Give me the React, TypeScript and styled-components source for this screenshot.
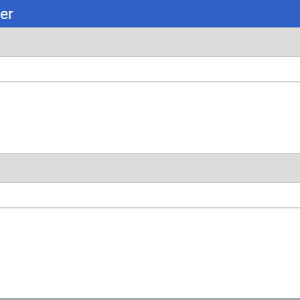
import styled, { createGlobalStyle } from 'styled-components'

const Global = createGlobalStyle`
    html, body {
        margin: 0;
        padding: 0;
        background: #ffffff;
        font-family: 'Roboto', 'Liberation Sans', sans-serif;
    }
`

const Page = styled.div`
    width: 300px;
    height: 300px;
    display: flex;
    flex-direction: column;
    overflow: hidden;
`

const TopBar = styled.div`
    height: 27px;
    background-color: #2f62c9;
    border-bottom: 1px solid #98a4c4;
    display: flex;
    align-items: center;
    color: white;
    font-size: 15px;
`

const Band = styled.div<{ $top?: boolean }>`
    height: 28px;
    background-color: #dcdcdc;
    border-top: ${p => (p.$top ? '1px solid #cfcfcf' : 'none')};
    border-bottom: 1px solid #c9c9c9;
`

const Row = styled.div`
    height: 24px;
    border-bottom: 1px solid #d2d2d2;
    box-shadow: 0 1px 0 #ececec;
`

const Filler = styled.div<{ $h: number }>`
    height: ${p => p.$h}px;
`

const Bottom = styled.div`
    flex: 1;
    border-bottom: 2px solid #a9a9b0;
`

export default function App() {
    return (
        <Page>
            <Global />
            <TopBar>er</TopBar>
            <Band />
            <Row />
            <Filler $h={71} />
            <Band $top />
            <Row />
            <Bottom />
        </Page>
    )
}
